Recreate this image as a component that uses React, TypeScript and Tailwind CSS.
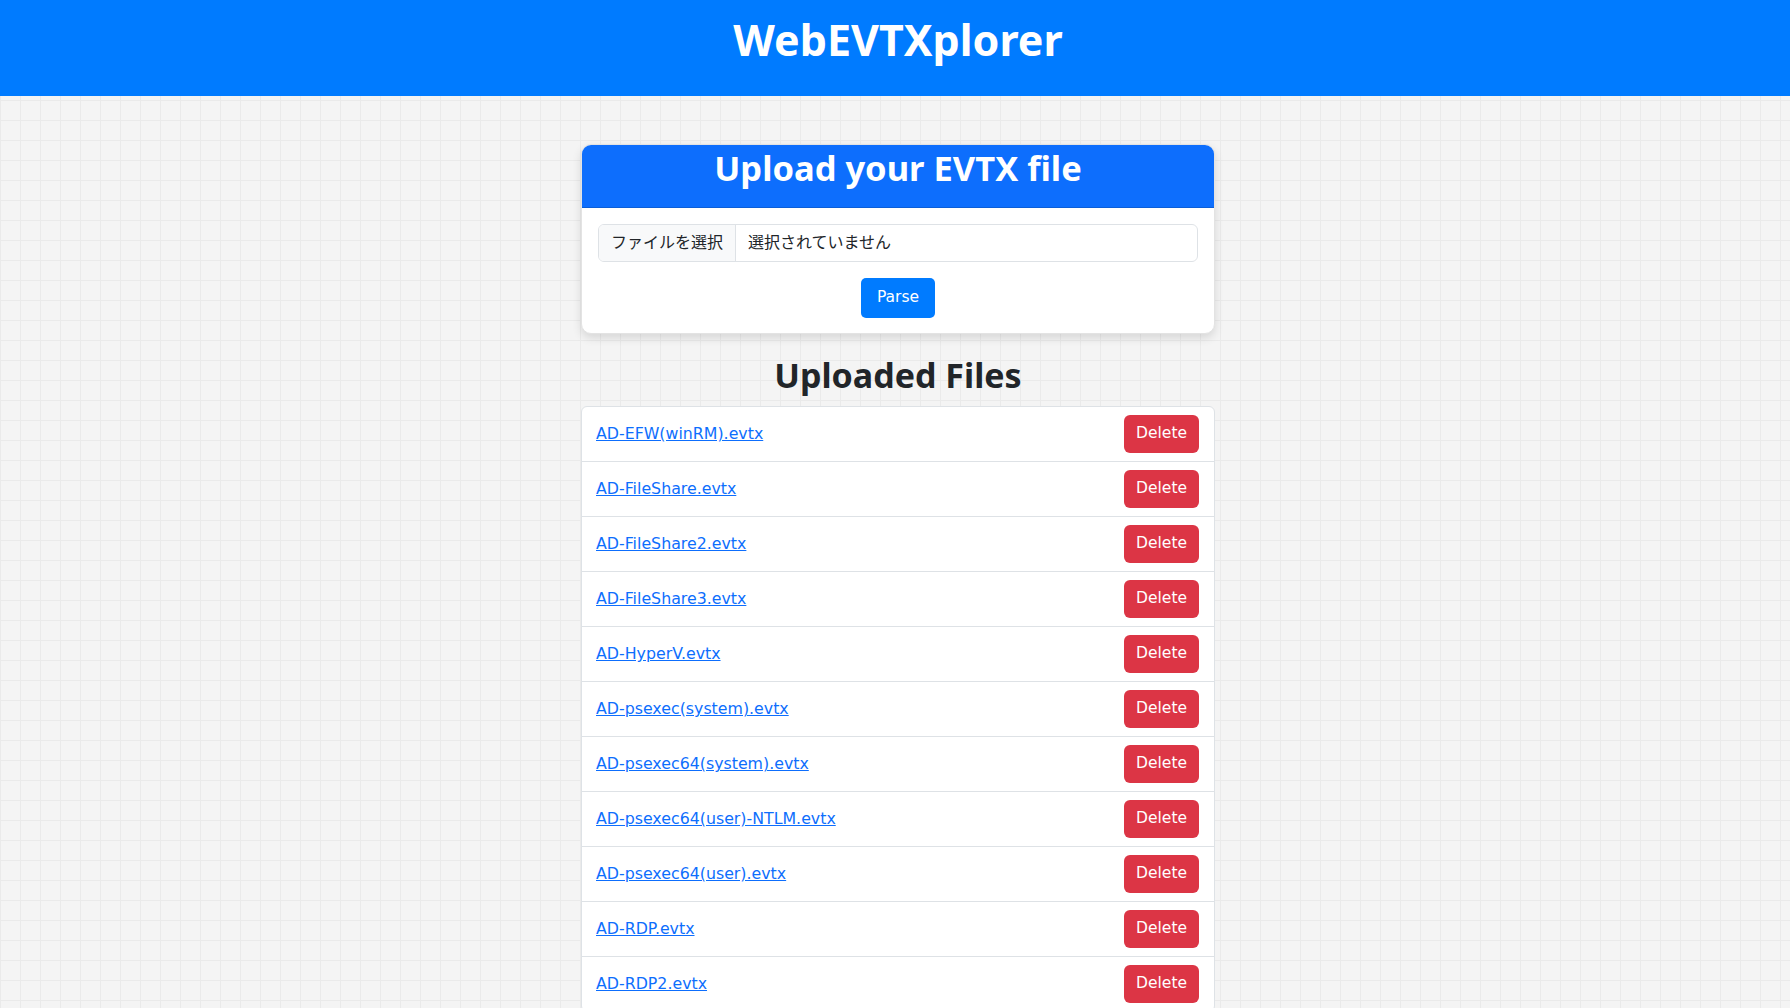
import React from 'react';

const files = [
  'AD-EFW(winRM).evtx',
  'AD-FileShare.evtx',
  'AD-FileShare2.evtx',
  'AD-FileShare3.evtx',
  'AD-HyperV.evtx',
  'AD-psexec(system).evtx',
  'AD-psexec64(system).evtx',
  'AD-psexec64(user)-NTLM.evtx',
  'AD-psexec64(user).evtx',
  'AD-RDP.evtx',
  'AD-RDP2.evtx',
];

const bodyFont = { fontFamily: '"DejaVu Sans", "Noto Sans CJK JP", sans-serif' };

function UploadCard() {
  return (
    <div className="w-[634px] mx-auto bg-white rounded-[10px] border border-[#e3e3e3] shadow-[0_4px_10px_rgba(0,0,0,0.12)] overflow-hidden">
      <div className="h-[63px] bg-[#0d6efd] border-b border-[#0b5ed7] pt-[2px]">
        <h2 className="text-center text-white font-bold text-[34.5px] leading-[42px]">Upload your EVTX file</h2>
      </div>
      <div className="px-4 pt-4 pb-[15px] flex flex-col items-center gap-4" style={bodyFont}>
        <div className="w-full h-[38px] flex border border-[#dee2e6] rounded-[6px] overflow-hidden text-[16px] text-[#212529]">
          <span className="px-3 flex items-center bg-[#f8f9fa] border-r border-[#dee2e6]">ファイルを選択</span>
          <span className="px-3 flex items-center">選択されていません</span>
        </div>
        <button className="h-[40px] px-4 rounded-[5px] bg-[#007bff] text-white text-[15.5px]">Parse</button>
      </div>
    </div>
  );
}

function FileList() {
  return (
    <ul className="w-[634px] mx-auto bg-white border border-[#dee2e6] rounded-[6px]" style={bodyFont}>
      {files.map((name, i) => (
        <li
          key={name}
          className={`flex items-center justify-between pl-[14px] pr-[15px] py-2 ${i < files.length - 1 ? 'border-b border-[#dee2e6]' : ''}`}
        >
          <a href="#" className="text-[#0d6efd] underline text-[15.8px]">{name}</a>
          <button className="h-[38px] px-3 rounded-[6px] bg-[#dc3545] text-white text-[15.5px]">Delete</button>
        </li>
      ))}
    </ul>
  );
}

export default function App() {
  return (
    <div
      className="min-h-screen bg-[#f4f4f4] bg-[linear-gradient(to_right,#eaeaea_1px,transparent_1px),linear-gradient(to_bottom,#eaeaea_1px,transparent_1px)] bg-[size:20px_20px] text-[#212529]"
      style={{ fontFamily: '"Noto Sans", "Noto Sans CJK JP", sans-serif' }}
    >
      <header className="h-[96px] bg-[#007bff] pt-[14px] pl-[6px]">
        <h1 className="text-center text-white font-bold text-[43px] leading-[1.2]">WebEVTXplorer</h1>
      </header>
      <main className="pt-[48px] pb-10 pl-[6px]">
        <UploadCard />
        <h2 className="text-center font-bold text-[34px] leading-[42px] mt-[20px] mb-[10px]">Uploaded Files</h2>
        <FileList />
      </main>
    </div>
  );
}
